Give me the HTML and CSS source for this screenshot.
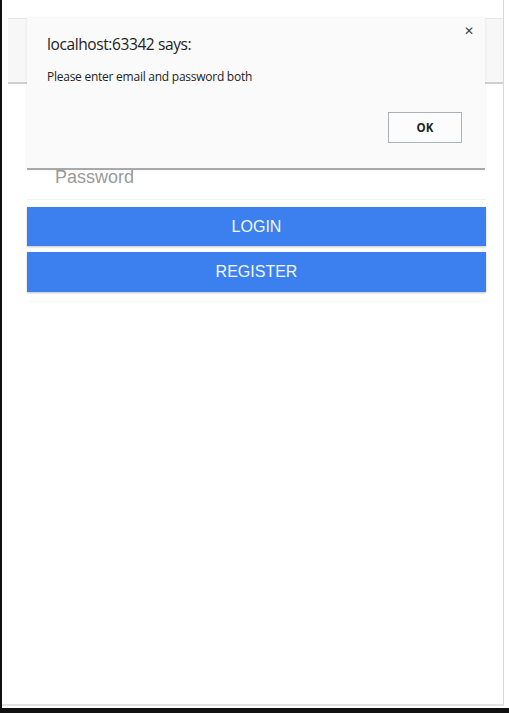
FILE: index.html
```html
<!DOCTYPE html>
<html>
<head>
<meta charset="utf-8">
<link rel="stylesheet" href="styles.css">
</head>
<body>
<div class="screen">
  <div class="main">
    <div class="edge"></div>
    <div class="window">
      <div class="header"></div>
      <div class="form">
        <div class="field email"></div>
        <div class="field password"><span class="placeholder">Password</span></div>
        <button class="btn login">LOGIN</button>
        <button class="btn register">REGISTER</button>
        <div class="divider"></div>
      </div>
      <div class="dialog">
        <div class="dialog-title">localhost:63342 says:</div>
        <div class="dialog-msg">Please enter email and password both</div>
        <div class="dialog-actions"><button class="ok">OK</button></div>
        <span class="close">&#x2715;</span>
      </div>
    </div>
    <div class="gutter"></div>
  </div>
  <div class="bottom-bar"></div>
</div>
</body>
</html>
```

FILE: styles.css
```css
* { box-sizing: border-box; }
html, body { margin: 0; padding: 0; background: #fff; }
.screen { width: 509px; height: 713px; display: flex; flex-direction: column; }
.main { flex: 1; display: flex; }
.edge { width: 2px; background: #111; }
.window {
  position: relative;
  width: 502px;
  border-right: 1px solid #d8d8d8;
  border-bottom: 2px solid #e2e2e2;
  margin-bottom: 2px;
  background: #fff;
}
.gutter { flex: 1; background: #fff; }
.bottom-bar { height: 5px; background: #111; }
.header {
  margin-top: 18px;
  margin-left: 6px;
  height: 66px;
  background: #f7f7f7;
  border-top: 1px solid #e8e8e8;
  border-bottom: 2px solid #cfcfcf;
}
.form { padding: 0 17px 0 25px; display: flex; flex-direction: column; }
.field.email { height: 86px; }
.field.password {
  height: 30px;
  padding-left: 28px;
  font-family: "Liberation Sans", Arial, sans-serif;
  font-size: 18px;
  line-height: 14px;
  color: #9a9a9a;
  border-bottom: 1px solid #f2f2f2;
}
.btn {
  border: none;
  color: #f4f8ff;
  background: #3c80ef;
  font-family: "Liberation Sans", Arial, sans-serif;
  font-size: 16px;
  height: 39px;
  padding: 0;
  box-shadow: 0 1px 2px rgba(0,0,0,0.25);
}
.btn.login { margin-top: 7px; }
.btn.register { margin-top: 6px; height: 40px; }
.divider { margin-top: 8px; height: 3px; background: #fbfdf8; }
.dialog {
  position: absolute;
  left: 25px;
  top: 18px;
  width: 458px;
  height: 152px;
  background: #fafafa;
  border-bottom: 2px solid #a9a9a9;
  box-shadow: 0 0 3px rgba(0,0,0,0.08);
  padding: 16px 23px 0 20px;
  font-family: "Open Sans", "Noto Sans", sans-serif;
  color: #222;
}
.dialog-title { font-size: 15.5px; line-height: 20px; letter-spacing: -0.4px; }
.dialog-msg { margin-top: 16px; font-size: 12px; line-height: 14px; letter-spacing: -0.25px; }
.dialog-actions { display: flex; justify-content: flex-end; margin-top: 28px; }
.ok {
  width: 74px;
  height: 31px;
  background: #fcfcfc;
  border: 1px solid #a9b0b6;
  font-family: "Open Sans", sans-serif;
  font-weight: 700;
  font-size: 11.5px;
  color: #222;
  padding: 0;
}
.close {
  position: absolute;
  right: 11px;
  top: 6px;
  font-size: 12px;
  color: #444;
  font-family: "DejaVu Sans", sans-serif;
}
```
